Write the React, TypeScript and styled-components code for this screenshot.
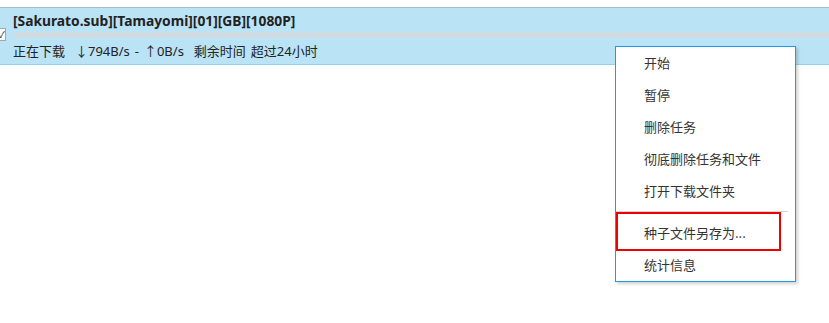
import React from "react";
import styled, { createGlobalStyle } from "styled-components";

// --- Data ---
interface MenuEntry {
  label: string;
  marked?: boolean;
  separatorBefore?: boolean;
}

const menuItems: MenuEntry[] = [
  { label: "开始" },
  { label: "暂停" },
  { label: "删除任务" },
  { label: "彻底删除任务和文件" },
  { label: "打开下载文件夹" },
  { label: "种子文件另存为...", marked: true, separatorBefore: true },
  { label: "统计信息" },
];

// --- Styled Components ---
const GlobalStyle = createGlobalStyle`
  body {
    margin: 0;
    background: #ffffff;
    font-family: "Noto Sans", "Noto Sans CJK SC", sans-serif;
  }
`;

const Page = styled.div`
  position: relative;
  width: 829px;
  height: 323px;
  padding-top: 7px;
  box-sizing: border-box;
  overflow: hidden;
`;

const TaskRow = styled.div`
  position: relative;
  height: 56px;
  background: #bbe3f6;
  border-top: 1px solid #a3bccd;
  border-bottom: 1px solid #8ed2f2;
  padding-left: 13px;
  display: flex;
  flex-direction: column;
`;

const Title = styled.div`
  font-family: "Noto Sans", "Noto Sans CJK SC", sans-serif;
  font-size: 13.8px;
  font-weight: bold;
  color: #222;
  line-height: 18px;
  margin-top: 4px;
`;

const Progress = styled.div`
  height: 4px;
  background: #d8d8d8;
  margin-top: 3px;
`;

const Status = styled.div`
  font-family: "Noto Sans", "Noto Sans CJK SC", sans-serif;
  font-size: 13px;
  color: #222;
  line-height: 18px;
  margin-top: 5px;
  white-space: pre;
  word-spacing: 1.6px;
`;

const Check = styled.div`
  position: absolute;
  left: -7px;
  top: 20px;
  width: 11px;
  height: 11px;
  background: #fff;
  border: 1px solid #9aa;
  font-size: 9px;
  line-height: 11px;
  text-align: right;
  color: #222;
`;

const Menu = styled.div`
  position: absolute;
  left: 615px;
  top: 46px;
  width: 179px;
  background: #ffffff;
  border: 1px solid #1e9de6;
  box-shadow: 2px 2px 3px rgba(0, 0, 0, 0.18);
  display: flex;
  flex-direction: column;
`;

const Separator = styled.div`
  height: 1px;
  background: #d4d4d4;
  margin: 4px 7px 5px 0;
`;

const Item = styled.div<{ $marked?: boolean }>`
  position: relative;
  height: 32px;
  line-height: 32px;
  padding-left: 28px;
  font-family: "Noto Sans CJK SC", sans-serif;
  font-size: 13px;
  color: #333;

  ${(p) =>
    p.$marked &&
    `
    &::after {
      content: "";
      position: absolute;
      left: 0;
      top: -5px;
      width: 161px;
      height: 35px;
      border: 2px solid #ee0000;
    }
  `}
`;

// --- Componente Principal ---
const App: React.FC = () => {
  return (
    <>
      <GlobalStyle />
      <Page>
        <TaskRow>
          <Check>✓</Check>
          <Title>[Sakurato.sub][Tamayomi][01][GB][1080P]</Title>
          <Progress />
          <Status>正在下载  ↓794B/s - ↑0B/s  剩余时间 超过24小时</Status>
        </TaskRow>

        <Menu>
          {menuItems.map((item) => (
            <React.Fragment key={item.label}>
              {item.separatorBefore && <Separator />}
              <Item $marked={item.marked}>{item.label}</Item>
            </React.Fragment>
          ))}
        </Menu>
      </Page>
    </>
  );
};

export default App;
